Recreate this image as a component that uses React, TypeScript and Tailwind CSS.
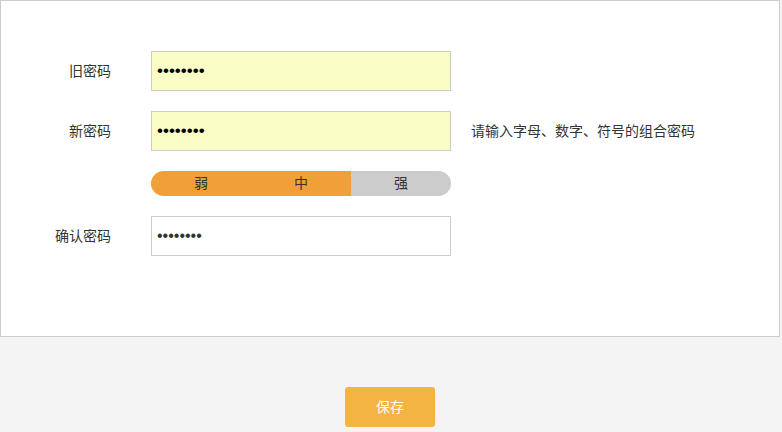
import React from 'react';

const font = "font-['Liberation_Sans','Noto_Sans_CJK_SC',sans-serif]";

const Field = ({ label, tint, hint }: { label: string; tint?: boolean; hint?: string }) => (
  <div className="flex items-center h-[40px]">
    <label className="w-[110px] text-right text-[14px] text-[#333]">{label}</label>
    <input
      type="password"
      readOnly
      defaultValue="12345678"
      className={`ml-[40px] w-[300px] h-[40px] border border-[#ccc] px-[5px] outline-none ${
        tint ? 'bg-[#fafdc6] text-black text-[17px]' : 'bg-white text-[#333] text-[16px]'
      }`}
    />
    {hint && <span className="ml-[20px] text-[14px] text-[#333]">{hint}</span>}
  </div>
);

const App = () => {
  return (
    <div className={`w-[782px] h-[432px] bg-[#f4f4f4] ${font}`}>
      <div className="w-[780px] h-[337px] bg-white border border-[#ccc] pt-[50px] flex flex-col gap-[20px]">
        <Field label="旧密码" tint />
        <Field label="新密码" tint hint="请输入字母、数字、符号的组合密码" />
        <div className="flex h-[25px] ml-[150px] w-[300px] rounded-full overflow-hidden text-[14px] text-[#333]">
          <div className="w-[100px] flex items-center justify-center bg-[#f19f38]">弱</div>
          <div className="w-[100px] flex items-center justify-center bg-[#f19f38]">中</div>
          <div className="w-[100px] flex items-center justify-center bg-[#cccccc]">强</div>
        </div>
        <Field label="确认密码" />
      </div>
      <div className="flex justify-center pt-[50px] pr-[2px]">
        <button className="w-[90px] h-[40px] rounded-[3px] bg-[#f4b443] text-white text-[14px]">保存</button>
      </div>
    </div>
  );
};

export default App;
